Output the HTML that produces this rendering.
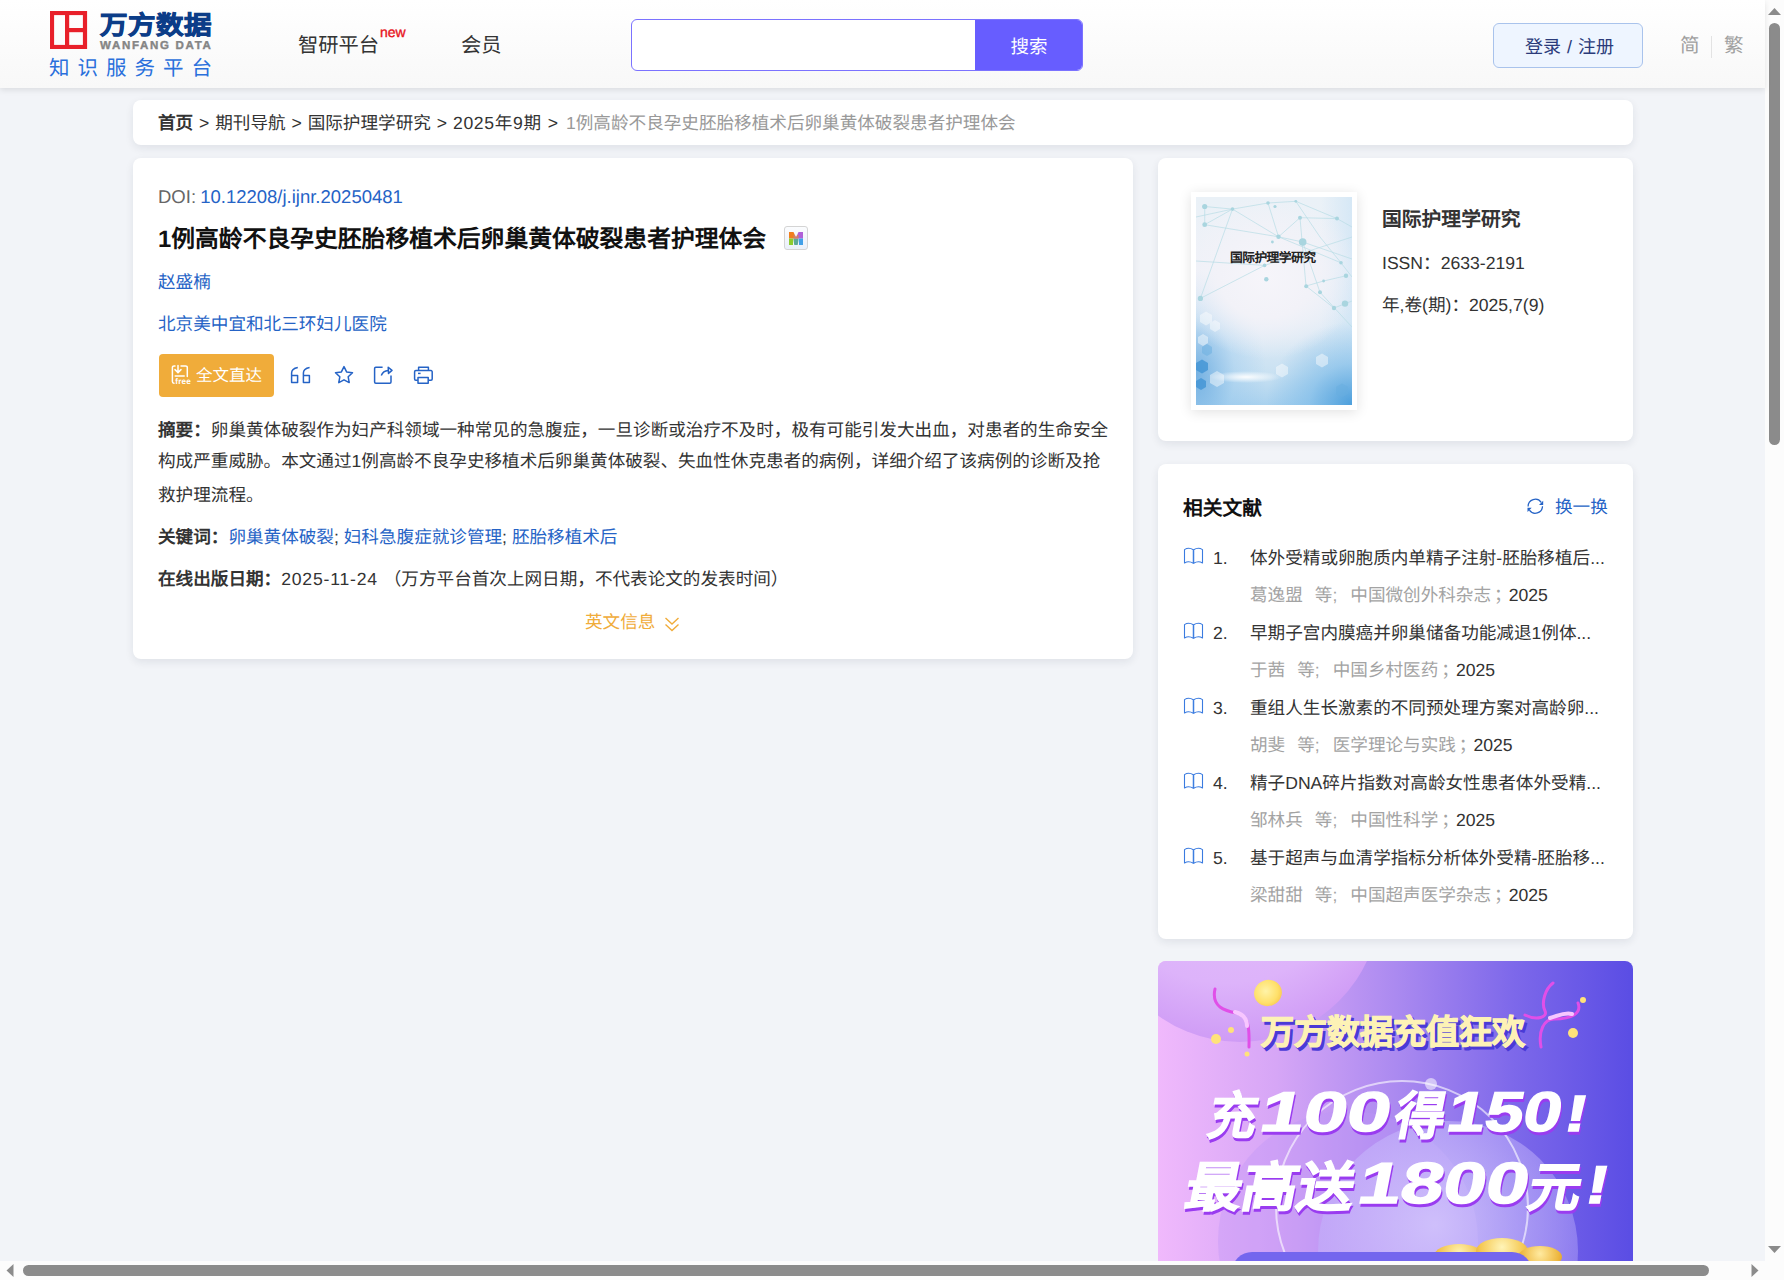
<!DOCTYPE html>
<html lang="zh-CN">
<head>
<meta charset="utf-8">
<style>
*{margin:0;padding:0;box-sizing:border-box}
html,body{width:1784px;height:1280px;overflow:hidden}
body{position:relative;word-spacing:1px;text-rendering:geometricPrecision;background:#f2f4f8;font-family:"Liberation Sans",sans-serif;color:#333;font-size:17.6px}
.a{position:absolute;white-space:nowrap}
.card{position:absolute;background:#fff;border-radius:8px;box-shadow:0 3px 8px rgba(20,30,60,0.085)}
#hdr{position:absolute;left:0;top:0;width:1765px;height:88px;background:linear-gradient(#ffffff,#f8f8f8);box-shadow:0 2px 6px rgba(0,0,0,0.10);z-index:2}
.blue{color:#2563c6}
</style>
</head>
<body>
<div id="hdr">
  <!-- logo -->
  <svg class="a" style="left:50px;top:11px" width="38" height="38" viewBox="0 0 38 38">
    <rect x="2" y="2" width="33" height="34" fill="none" stroke="#e8202a" stroke-width="4.2"/>
    <rect x="15" y="2" width="4.2" height="34" fill="#e8202a"/>
    <rect x="17" y="17" width="18" height="4.2" fill="#e8202a"/>
  </svg>
  <div class="a" style="left:100px;top:8.5px;font-size:27.5px;font-weight:900;color:#0c3d88;line-height:36px;letter-spacing:0.5px;-webkit-text-stroke:0.9px #0c3d88;transform:scaleY(0.93);transform-origin:0 0">万方数据</div>
  <div class="a" style="left:100px;top:39px;font-size:11.5px;font-weight:bold;color:#858585;line-height:14px;letter-spacing:1.7px;word-spacing:0;-webkit-text-stroke:0.4px #858585">WANFANG DATA</div>
  <div class="a" style="left:49px;top:56px;font-size:20.5px;color:#2a70dc;line-height:26px;letter-spacing:8px">知识服务平台</div>

  <div class="a" style="left:298px;top:31px;font-size:20.3px;color:#333;line-height:30px">智研平台</div>
  <div class="a" style="left:380px;top:24px;font-size:14px;color:#e8141c;line-height:16px;-webkit-text-stroke:0.35px #e8141c">new</div>
  <div class="a" style="left:461px;top:31px;font-size:20.3px;color:#333;line-height:30px">会员</div>

  <div class="a" style="left:631px;top:19px;width:452px;height:52px;border:1px solid #7b72ff;border-radius:6px;background:#fff;overflow:hidden">
    <div class="a" style="left:343px;top:0;width:108px;height:50px;background:#675dff;color:#fff;font-size:18.5px;line-height:53px;text-align:center">搜索</div>
  </div>

  <div class="a" style="left:1493px;top:23px;width:150px;height:45px;border:1px solid #a9c3ec;border-radius:6px;background:#eef5ff;color:#2b3b7a;font-size:18px;line-height:46px;text-align:center;padding-left:3px">登录 / 注册</div>
  <div class="a" style="left:1680px;top:31px;font-size:19.5px;color:#a0a0a0;line-height:30px">简</div>
  <div class="a" style="left:1711px;top:36px;width:1px;height:22px;background:#e3e3e3"></div>
  <div class="a" style="left:1724px;top:31px;font-size:19.5px;color:#a0a0a0;line-height:30px">繁</div>
</div>

<!-- breadcrumb -->
<div class="card" style="left:133px;top:100px;width:1500px;height:45px"></div>
<div class="a" style="left:158px;top:108px;line-height:30px;font-size:17.6px;color:#333"><b>首页</b> &gt; 期刊导航 &gt; 国际护理学研究 &gt; <span style="letter-spacing:0.7px">2025年9期</span> &gt; <span style="color:#999;margin-left:2px">1例高龄不良孕史胚胎移植术后卵巢黄体破裂患者护理体会</span></div>

<!-- main card -->
<div class="card" style="left:133px;top:158px;width:1000px;height:501px"></div>
<div class="a" style="left:158px;top:183px;line-height:28px;font-size:18.5px;color:#666;word-spacing:-1px">DOI: <span class="blue">10.12208/j.ijnr.20250481</span></div>
<div class="a" style="left:158px;top:223px;line-height:34px;font-size:23.8px;font-weight:bold;color:#111">1例高龄不良孕史胚胎移植术后卵巢黄体破裂患者护理体会</div>
<div class="a" style="left:784px;top:226px;width:24px;height:24px;border:1.5px solid #d4d4d4;border-radius:3px;background:linear-gradient(#fbfcfe,#eaf0fa)">
  <svg class="a" style="left:3.5px;top:4.5px" width="14" height="13" viewBox="0 0 14 13"><defs><clipPath id="mc"><path d="M0 0H4.5L7 5.5 9.5 0H14V13H10V6L8.7 13H5.3L4 6V13H0z"/></clipPath></defs>
  <g clip-path="url(#mc)"><rect x="0" y="0" width="7" height="6.5" fill="#f07e1e"/><rect x="0" y="6.5" width="4.5" height="6.5" fill="#8ccc2e"/><rect x="4.5" y="6.5" width="5" height="6.5" fill="#5aa898"/><rect x="7" y="0" width="7" height="6.5" fill="#b060d8"/><rect x="9.5" y="6.5" width="4.5" height="6.5" fill="#42a0e8"/><rect x="4.5" y="3" width="5" height="3.5" fill="#d0806a"/></g></svg>
</div>
<div class="a blue" style="left:158px;top:268px;line-height:28px;font-size:17.6px">赵盛楠</div>
<div class="a blue" style="left:158px;top:309.5px;line-height:28px;font-size:17.6px">北京美中宜和北三环妇儿医院</div>

<div class="a" style="left:159px;top:354px;width:115px;height:43px;border-radius:4px;background:#f0ac3a"></div>
<svg class="a" style="left:170px;top:364px" width="22" height="22" viewBox="0 0 22 22" fill="none" stroke="#fff" stroke-width="1.5" stroke-linecap="round">
  <path d="M5 1.9H4A1.6 1.6 0 0 0 2.4 3.5V17.6A1.6 1.6 0 0 0 4 19.2"/><path d="M11 1.9H15.7A1.6 1.6 0 0 1 17.3 3.5V12.6"/>
  <path d="M8 1.5V8.6M5 5.6L8 8.6 11 5.6M5.2 12H14.2"/>
  <text x="5.3" y="20.2" font-size="8.2" font-weight="bold" font-family="Liberation Sans" fill="#fff" stroke="none" letter-spacing="0.2">free</text>
</svg>
<div class="a" style="left:196px;top:362px;line-height:28px;font-size:16.5px;color:#fff">全文直达</div>
<svg class="a" style="left:288px;top:364px" width="24" height="22" viewBox="0 0 24 22" fill="none" stroke="#2563c6" stroke-width="1.5" stroke-linejoin="round">
  <path d="M9.8 3.4C6 4 3.6 5.6 3.6 9V18.6H9.6V11.6H3.6"/><path d="M21.6 3.4C17.8 4 15.4 5.6 15.4 9V18.6H21.4V11.6H15.4"/>
</svg>
<svg class="a" style="left:333px;top:364px" width="22" height="22" viewBox="0 0 22 22" fill="none" stroke="#2563c6" stroke-width="1.5" stroke-linejoin="round">
  <path d="M11 2.6l2.6 5.3 5.9.8-4.3 4.1 1 5.8L11 15.8l-5.2 2.8 1-5.8L2.5 8.7l5.9-.8z"/>
</svg>
<svg class="a" style="left:372px;top:364px" width="22" height="22" viewBox="0 0 22 22" fill="none" stroke="#2563c6" stroke-width="1.5" stroke-linejoin="round">
  <path d="M10.6 3.2H3.8A1.2 1.2 0 0 0 2.6 4.4V18A1.2 1.2 0 0 0 3.8 19.2H17.8A1.2 1.2 0 0 0 19 18V11.6"/>
  <path d="M9.3 11.6C10.5 8.2 12.8 6.6 16.2 6.4"/><path d="M16.2 3.2L20 6.4 16.5 9.4z"/>
</svg>
<svg class="a" style="left:412px;top:364px" width="22" height="22" viewBox="0 0 22 22" fill="none" stroke="#2563c6" stroke-width="1.5" stroke-linejoin="round">
  <path d="M6.6 6.6V3.2H16.4V6.6"/><path d="M5.8 16.2H3.8A1.2 1.2 0 0 1 2.6 15V7.8A1.2 1.2 0 0 1 3.8 6.6H19A1.2 1.2 0 0 1 20.2 7.8V15A1.2 1.2 0 0 1 19 16.2H16.4"/><rect x="6" y="13.6" width="10.2" height="5.6"/><path d="M6 9.4H8.6"/>
</svg>

<div class="a" style="left:158px;top:415px;line-height:30px;font-size:17.6px;color:#333"><b>摘要：</b>卵巢黄体破裂作为妇产科领域一种常见的急腹症，一旦诊断或治疗不及时，极有可能引发大出血，对患者的生命安全</div>
<div class="a" style="left:158px;top:446px;line-height:30px;font-size:17.6px;color:#333">构成严重威胁。本文通过1例高龄不良孕史移植术后卵巢黄体破裂、失血性休克患者的病例，详细介绍了该病例的诊断及抢</div>
<div class="a" style="left:158px;top:480px;line-height:30px;font-size:17.6px;color:#333">救护理流程。</div>
<div class="a" style="left:158px;top:522px;line-height:30px;font-size:17.6px;color:#333;word-spacing:0"><b>关键词：</b><span class="blue">卵巢黄体破裂</span>; <span class="blue">妇科急腹症就诊管理</span>; <span class="blue">胚胎移植术后</span></div>
<div class="a" style="left:158px;top:564px;line-height:30px;font-size:17.6px;color:#333"><b>在线出版日期：</b><span style="letter-spacing:0.8px">2025-11-24</span> （万方平台首次上网日期，不代表论文的发表时间）</div>
<div class="a" style="left:585px;top:607px;line-height:30px;font-size:17.6px;color:#f0ac3a">英文信息</div>
<svg class="a" style="left:664px;top:616px" width="16" height="16" viewBox="0 0 16 16" fill="none" stroke="#f0ac3a" stroke-width="1.4"><path d="M1.5 2l6.5 6 6.5-6M1.5 8.5l6.5 6 6.5-6"/></svg>

<!-- journal card -->
<div class="card" style="left:1158px;top:158px;width:475px;height:283px"></div>
<div class="a" style="left:1191px;top:192px;width:166px;height:218px;background:#fff;box-shadow:0 2px 12px rgba(0,0,0,0.12)"></div>
<div class="a" style="left:1196px;top:197px;width:156px;height:208px;overflow:hidden;background:radial-gradient(ellipse 60% 40% at 45% 38%,#f6f5fa 0%,#f2f2f8 50%,rgba(242,242,248,0) 100%),radial-gradient(ellipse 55% 40% at 100% 100%,rgba(70,155,218,0.95) 0%,rgba(120,185,232,0.6) 50%,rgba(200,225,244,0) 100%),radial-gradient(ellipse 45% 50% at 0% 85%,rgba(95,165,222,0.8) 0%,rgba(150,200,238,0.4) 55%,rgba(200,225,244,0) 100%),linear-gradient(90deg,rgba(255,255,255,0) 80%,rgba(205,228,245,0.7) 100%),linear-gradient(180deg,#eaf1f7 0%,#eef1f8 35%,#e1ecf6 60%,#c9e1f2 85%,#a9d1ee 100%)">
  <svg width="156" height="208" viewBox="0 0 156 208" style="position:absolute;left:0;top:0">
    
    <g stroke="#b8dce5" stroke-width="0.7" fill="none">
      <path d="M8.7 9.5L36.5 12.1 72 6 99.8 4.3 141 21.6 156 30M8.7 9.5L8.7 27.7 36.5 12.1M8.7 27.7L82.5 39.8 145 65.8 156 80M36.5 12.1L82.5 39.8 104 20.7 141 21.6M72 6L82.5 39.8 106.7 45 156 62M36.5 12.1L4.4 101.4M0 64L68.6 68.4 156 40M68.6 68.4L4.4 101.4M106.7 45L124 95.3 156 130M104 20.7L110 89 127.6 84 150 78.8M110 89L138 111 156 104M99.8 4.3L124 40 145 65.8M0 20L36.5 12.1"/>
    </g>
    <g fill="#a9d5df">
      <circle cx="8.7" cy="9.5" r="2.6"/><circle cx="8.7" cy="27.7" r="2.4"/><circle cx="36.5" cy="12.1" r="1.8"/><circle cx="72" cy="6" r="1.8"/><circle cx="79" cy="9.5" r="1.6"/><circle cx="99.8" cy="4.3" r="1.4"/><circle cx="104" cy="20.7" r="2"/><circle cx="141" cy="21.6" r="2"/><circle cx="82.5" cy="39.8" r="2.2"/><circle cx="106.7" cy="45" r="3.8"/><circle cx="76.4" cy="45" r="1.4"/><circle cx="68.6" cy="68.4" r="1.8"/><circle cx="70.3" cy="82.3" r="2.2"/><circle cx="4.4" cy="101.4" r="2.6"/><circle cx="110.2" cy="89.3" r="2"/><circle cx="124" cy="95.3" r="2"/><circle cx="127.6" cy="84" r="1.4"/><circle cx="150" cy="78.8" r="2.2"/><circle cx="138" cy="111" r="2.2"/><circle cx="149" cy="106.6" r="3.2"/><circle cx="145" cy="65.8" r="1.8"/>
    </g>
    <g fill="#ffffff" opacity="0.45"><path d="M4 118l6 -3.5 6 3.5v7l-6 3.5 -6 -3.5z"/><path d="M14 126l5 -3 5 3v6l-5 3 -5 -3z"/><path d="M2 140l5 -3 5 3v6l-5 3 -5 -3z"/><path d="M14 178l7 -4 7 4v8l-7 4 -7 -4z"/><path d="M80 170l6 -3.5 6 3.5v7l-6 3.5 -6 -3.5z"/><path d="M120 160l6 -3.5 6 3.5v7l-6 3.5 -6 -3.5z"/></g>
    <g fill="#3d92d4" opacity="0.75"><path d="M0 166l6 -3.5 6 3.5v7l-6 3.5 -6 -3.5z"/><path d="M0 184l5 -3 5 3v6l-5 3 -5 -3z"/></g>
    <g fill="#68aee0" opacity="0.5"><path d="M6 150l5 -3 5 3v6l-5 3 -5 -3z"/><path d="M140 190l6 -3.5 6 3.5v7l-6 3.5 -6 -3.5z"/></g>
    <defs><radialGradient id="fl"><stop offset="0" stop-color="#fff" stop-opacity="0.95"/><stop offset="0.5" stop-color="#fff" stop-opacity="0.5"/><stop offset="1" stop-color="#fff" stop-opacity="0"/></radialGradient></defs><ellipse cx="50" cy="180" rx="36" ry="6" fill="url(#fl)"/>
  </svg>
  <div class="a" style="left:34px;top:52px;font-size:12.8px;font-weight:bold;color:#222;line-height:18px;letter-spacing:-0.6px">国际护理学研究</div>
</div>
<div class="a" style="left:1382px;top:205px;font-size:19.8px;font-weight:bold;color:#333;line-height:30px">国际护理学研究</div>
<div class="a" style="left:1382px;top:248px;font-size:17.6px;color:#333;line-height:30px">ISSN：2633-2191</div>
<div class="a" style="left:1382px;top:290px;font-size:17.6px;color:#333;line-height:30px">年,卷(期)：2025,7(9)</div>

<!-- related card -->
<div class="card" style="left:1158px;top:464px;width:475px;height:475px"></div>
<div class="a" style="left:1183px;top:494px;font-size:19.8px;font-weight:bold;color:#111;line-height:30px">相关文献</div>
<svg class="a" style="left:1526px;top:498px" width="18" height="17" viewBox="0 0 18 17" fill="none" stroke="#2563c6" stroke-width="1.25">
  <path d="M2.1 8.4A7.2 7.2 0 0 1 15.2 4.3"/><path d="M16.5 8.2A7.2 7.2 0 0 1 3.4 12.1"/>
  <path d="M13 6.9H17.2V2.7z" fill="#2563c6" stroke="none"/><path d="M1.5 14V9.8H5.7z" fill="#2563c6" stroke="none"/>
</svg>
<div class="a blue" style="left:1555px;top:492px;font-size:17.6px;line-height:30px">换一换</div>
<svg class="a" style="left:1183px;top:547px" width="21" height="18" viewBox="0 0 21 18" fill="none" stroke="#3a7be0" stroke-width="1.1" stroke-linejoin="round"><path d="M1.5 2.6C4.2 0.9 7.6 1 10.3 2.8V16.3C7.6 14.5 4.2 14.4 1.5 15.9z"/><path d="M19.5 2.6C16.8 0.9 13.4 1 10.7 2.8V16.3C13.4 14.5 16.8 14.4 19.5 15.9z"/></svg>
<div class="a" style="left:1213px;top:543px;font-size:17.6px;color:#333;line-height:30px">1.</div>
<div class="a" style="left:1250px;top:543px;font-size:17.6px;color:#333;line-height:30px">体外受精或卵胞质内单精子注射-胚胎移植后...</div>
<div class="a" style="left:1250px;top:580px;font-size:17.6px;color:#a3a3a3;line-height:30px">葛逸盟<span style="margin-left:12px">等;</span><span style="margin-left:13px">中国微创外科杂志</span><span style="margin-left:3px">；</span><span style="color:#333;margin-left:-3px">2025</span></div>
<svg class="a" style="left:1183px;top:622px" width="21" height="18" viewBox="0 0 21 18" fill="none" stroke="#3a7be0" stroke-width="1.1" stroke-linejoin="round"><path d="M1.5 2.6C4.2 0.9 7.6 1 10.3 2.8V16.3C7.6 14.5 4.2 14.4 1.5 15.9z"/><path d="M19.5 2.6C16.8 0.9 13.4 1 10.7 2.8V16.3C13.4 14.5 16.8 14.4 19.5 15.9z"/></svg>
<div class="a" style="left:1213px;top:618px;font-size:17.6px;color:#333;line-height:30px">2.</div>
<div class="a" style="left:1250px;top:618px;font-size:17.6px;color:#333;line-height:30px">早期子宫内膜癌并卵巢储备功能减退1例体...</div>
<div class="a" style="left:1250px;top:655px;font-size:17.6px;color:#a3a3a3;line-height:30px">于茜<span style="margin-left:12px">等;</span><span style="margin-left:13px">中国乡村医药</span><span style="margin-left:3px">；</span><span style="color:#333;margin-left:-3px">2025</span></div>
<svg class="a" style="left:1183px;top:697px" width="21" height="18" viewBox="0 0 21 18" fill="none" stroke="#3a7be0" stroke-width="1.1" stroke-linejoin="round"><path d="M1.5 2.6C4.2 0.9 7.6 1 10.3 2.8V16.3C7.6 14.5 4.2 14.4 1.5 15.9z"/><path d="M19.5 2.6C16.8 0.9 13.4 1 10.7 2.8V16.3C13.4 14.5 16.8 14.4 19.5 15.9z"/></svg>
<div class="a" style="left:1213px;top:693px;font-size:17.6px;color:#333;line-height:30px">3.</div>
<div class="a" style="left:1250px;top:693px;font-size:17.6px;color:#333;line-height:30px">重组人生长激素的不同预处理方案对高龄卵...</div>
<div class="a" style="left:1250px;top:730px;font-size:17.6px;color:#a3a3a3;line-height:30px">胡斐<span style="margin-left:12px">等;</span><span style="margin-left:13px">医学理论与实践</span><span style="margin-left:3px">；</span><span style="color:#333;margin-left:-3px">2025</span></div>
<svg class="a" style="left:1183px;top:772px" width="21" height="18" viewBox="0 0 21 18" fill="none" stroke="#3a7be0" stroke-width="1.1" stroke-linejoin="round"><path d="M1.5 2.6C4.2 0.9 7.6 1 10.3 2.8V16.3C7.6 14.5 4.2 14.4 1.5 15.9z"/><path d="M19.5 2.6C16.8 0.9 13.4 1 10.7 2.8V16.3C13.4 14.5 16.8 14.4 19.5 15.9z"/></svg>
<div class="a" style="left:1213px;top:768px;font-size:17.6px;color:#333;line-height:30px">4.</div>
<div class="a" style="left:1250px;top:768px;font-size:17.6px;color:#333;line-height:30px">精子DNA碎片指数对高龄女性患者体外受精...</div>
<div class="a" style="left:1250px;top:805px;font-size:17.6px;color:#a3a3a3;line-height:30px">邹林兵<span style="margin-left:12px">等;</span><span style="margin-left:13px">中国性科学</span><span style="margin-left:3px">；</span><span style="color:#333;margin-left:-3px">2025</span></div>
<svg class="a" style="left:1183px;top:847px" width="21" height="18" viewBox="0 0 21 18" fill="none" stroke="#3a7be0" stroke-width="1.1" stroke-linejoin="round"><path d="M1.5 2.6C4.2 0.9 7.6 1 10.3 2.8V16.3C7.6 14.5 4.2 14.4 1.5 15.9z"/><path d="M19.5 2.6C16.8 0.9 13.4 1 10.7 2.8V16.3C13.4 14.5 16.8 14.4 19.5 15.9z"/></svg>
<div class="a" style="left:1213px;top:843px;font-size:17.6px;color:#333;line-height:30px">5.</div>
<div class="a" style="left:1250px;top:843px;font-size:17.6px;color:#333;line-height:30px">基于超声与血清学指标分析体外受精-胚胎移...</div>
<div class="a" style="left:1250px;top:880px;font-size:17.6px;color:#a3a3a3;line-height:30px">梁甜甜<span style="margin-left:12px">等;</span><span style="margin-left:13px">中国超声医学杂志</span><span style="margin-left:3px">；</span><span style="color:#333;margin-left:-3px">2025</span></div>

<!-- ad -->
<div class="a" style="left:1158px;top:961px;width:475px;height:320px;border-radius:8px 8px 0 0;overflow:hidden;background:linear-gradient(90deg,#f0b9fc 0%,#d6a6f6 25%,#ab8af0 50%,#7d68ea 75%,#5a4de4 100%)">
  <div class="a" style="left:-58px;top:-199px;width:280px;height:280px;border-radius:50%;background:radial-gradient(circle at 45% 30%,#e4bffb 0%,#ddb3fa 55%,#cd98f5 82%,#bd80f0 100%)"></div>
  <div class="a" style="left:60px;top:150px;width:260px;height:260px;border-radius:50%;background:rgba(190,150,245,0.35)"></div>
  <div class="a" style="left:160px;top:160px;width:260px;height:260px;border-radius:50%;background:radial-gradient(circle at 45% 40%,rgba(220,210,255,0.75) 0%,rgba(190,175,250,0.5) 60%,rgba(150,130,240,0.2) 100%)"></div>
  <div class="a" style="left:117px;top:119px;width:254px;height:254px;border-radius:50%;border:2px solid rgba(255,255,255,0.6)"></div>
  <div class="a" style="left:267px;top:117px;width:12px;height:12px;border-radius:50%;background:rgba(255,255,255,0.55)"></div>
  <!-- coin -->
  <div class="a" style="left:96px;top:19px;width:28px;height:26px;border-radius:50%;background:radial-gradient(circle at 45% 40%,#fff3a8 0%,#ffe06a 55%,#f2b53a 100%);transform:rotate(-20deg)"></div>
  <!-- ribbons -->
  <svg class="a" style="left:0;top:0" width="475" height="300" viewBox="0 0 475 300" fill="none">
    <path d="M57 28c-4 18 10 22 22 24 14 3 12 22 12 34" stroke="#e04fe8" stroke-width="3" stroke-linecap="round"/>
    <path d="M77 51c8 2 12 6 12 14" stroke="#f7c6ff" stroke-width="4" stroke-linecap="round"/>
    <path d="M395 22c-8 6-12 20-8 28 3 6-8 10-20 4M420 42c4 10-6 16-24 16-10 0-16 12-13 28" stroke="#e04fe8" stroke-width="3" stroke-linecap="round"/>
    <path d="M392 57c8-2 14-6 22-4" stroke="#f7c6ff" stroke-width="4" stroke-linecap="round"/>
    <g fill="#ffe27a"><circle cx="73" cy="69" r="3"/><circle cx="58" cy="78" r="5"/><circle cx="89" cy="93" r="2.5"/><circle cx="425" cy="39" r="3"/><circle cx="415" cy="72" r="5"/></g>
  </svg>
  <svg class="a" style="left:0;top:0" width="475" height="300" viewBox="0 0 475 300">
    <defs>
      <g id="l1">
        <text x="48" y="0" font-size="51" font-weight="bold" textLength="48" lengthAdjust="spacingAndGlyphs">充</text>
        <text x="99" y="-3" font-size="56" font-weight="bold" textLength="130" lengthAdjust="spacingAndGlyphs">100</text>
        <text x="234" y="0" font-size="51" font-weight="bold" textLength="50" lengthAdjust="spacingAndGlyphs">得</text>
        <text x="286" y="-3" font-size="56" font-weight="bold" textLength="114" lengthAdjust="spacingAndGlyphs">150</text>
        <text x="404" y="-3" font-size="51" font-weight="bold" textLength="22" lengthAdjust="spacingAndGlyphs">!</text>
      </g>
      <g id="l2">
        <text x="25" y="0" font-size="53" font-weight="bold" textLength="168" lengthAdjust="spacingAndGlyphs">最高送</text>
        <text x="197" y="-3" font-size="58" font-weight="bold" textLength="170" lengthAdjust="spacingAndGlyphs">1800</text>
        <text x="368" y="0" font-size="53" font-weight="bold" textLength="52" lengthAdjust="spacingAndGlyphs">元</text>
        <text x="425" y="-3" font-size="53" font-weight="bold" textLength="22" lengthAdjust="spacingAndGlyphs">!</text>
      </g>
    </defs>
    <g font-family="Liberation Sans, sans-serif">
      <text x="103" y="83" font-size="34" font-weight="bold" textLength="264" lengthAdjust="spacingAndGlyphs" fill="#4a3ad6" stroke="#4a3ad6" stroke-width="1.5" transform="translate(2.5,3)">万方数据充值狂欢</text>
      <text x="103" y="83" font-size="34" font-weight="bold" textLength="264" lengthAdjust="spacingAndGlyphs" fill="#fdf2b6" stroke="#fdf2b6" stroke-width="1.2">万方数据充值狂欢</text>
      <g transform="translate(0,173) skewX(-11)">
        <use href="#l1" transform="translate(1.5,3)" fill="#9a3cf0" stroke="#9a3cf0" stroke-width="1.4"/>
        <use href="#l1" fill="#ffffff" stroke="#ffffff" stroke-width="1.4"/>
      </g>
      <g transform="translate(0,245) skewX(-11)">
        <use href="#l2" transform="translate(1.5,3)" fill="#9a3cf0" stroke="#9a3cf0" stroke-width="1.4"/>
        <use href="#l2" fill="#ffffff" stroke="#ffffff" stroke-width="1.4"/>
      </g>
    </g>
  </svg>
  <div class="a" style="left:276px;top:283px;width:50px;height:24px;border-radius:50%;background:radial-gradient(circle at 50% 35%,#fff2b0,#f2c24a 70%,#e0a030)"></div>
  <div class="a" style="left:318px;top:277px;width:52px;height:26px;border-radius:50%;background:radial-gradient(circle at 50% 35%,#fff4b8,#f5c850 70%,#e3a535)"></div>
  <div class="a" style="left:360px;top:285px;width:44px;height:22px;border-radius:50%;background:radial-gradient(circle at 50% 35%,#ffeaa0,#eeb840 70%,#d99a2a)"></div>
  <div class="a" style="left:74px;top:291px;width:300px;height:40px;border-radius:20px;background:#7466ee"></div>
</div>

<!-- scrollbars -->
<div class="a" style="left:1765px;top:0;width:19px;height:1261px;background:#fcfcfc"></div>
<div class="a" style="left:1769px;top:23px;width:11px;height:422px;border-radius:6px;background:#8b8b8b"></div>
<div class="a" style="left:0;top:1261px;width:1784px;height:19px;background:#fcfcfc"></div>
<div class="a" style="left:23px;top:1265px;width:1686px;height:11px;border-radius:6px;background:#8b8b8b"></div>
<svg class="a" style="left:1767px;top:7px" width="15" height="9" viewBox="0 0 15 9"><path d="M1 8L7.5 1 14 8z" fill="#8b8b8b"/></svg>
<svg class="a" style="left:1767px;top:1245px" width="15" height="9" viewBox="0 0 15 9"><path d="M1 1L7.5 8 14 1z" fill="#8b8b8b"/></svg>
<svg class="a" style="left:5px;top:1263px" width="10" height="15" viewBox="0 0 10 15"><path d="M8.5 1L1.5 7.5 8.5 14z" fill="#8b8b8b"/></svg>
<svg class="a" style="left:1750px;top:1263px" width="10" height="15" viewBox="0 0 10 15"><path d="M1.5 1L8.5 7.5 1.5 14z" fill="#8b8b8b"/></svg>
</body>
</html>
